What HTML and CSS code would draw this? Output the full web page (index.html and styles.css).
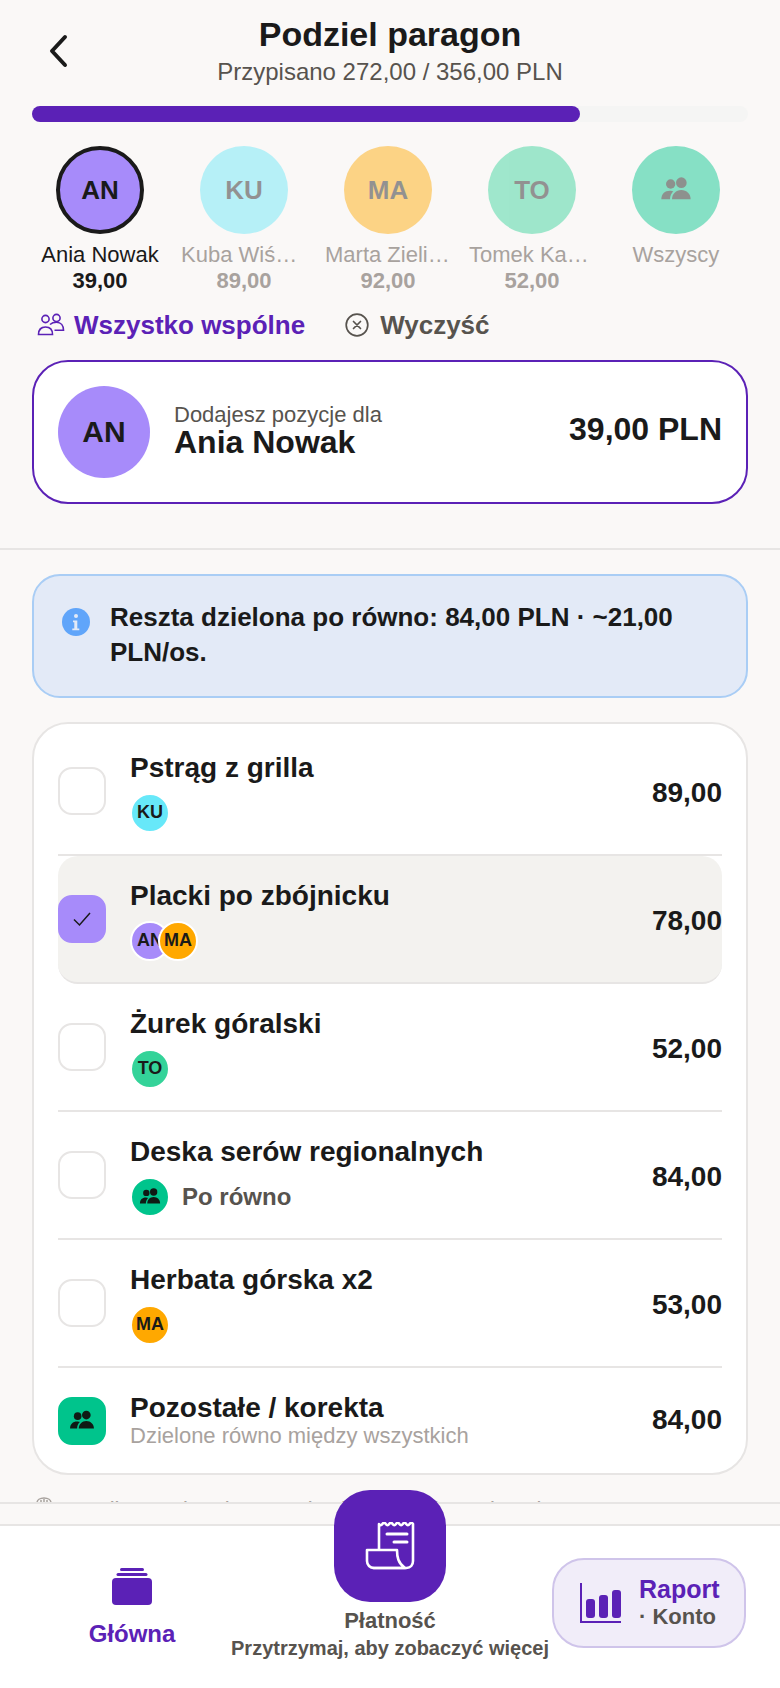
FILE: index.html
```html
<!DOCTYPE html>
<html lang="pl">
<head>
    <meta charset="UTF-8">
    <meta name="viewport" content="width=device-width, initial-scale=1.0">
    <title>Podziel paragon</title>
    <link rel="stylesheet" href="styles.css">
</head>
<body>
    <div class="screen">
        <header class="top">
            <button class="back" aria-label="Wstecz">
                <svg width="24" height="36" viewBox="0 0 24 36"><path d="M19 4 L6 18 L19 32" fill="none" stroke="#1a1a1a" stroke-width="4" stroke-linecap="round" stroke-linejoin="round"/></svg>
            </button>
            <h1>Podziel paragon</h1>
            <p class="subtitle">Przypisano 272,00 / 356,00 PLN</p>
        </header>

        <div class="progress"><div class="progress-fill"></div></div>

        <div class="people">
            <div class="person active">
                <div class="circle purple">AN</div>
                <div class="person-name">Ania Nowak</div>
                <div class="person-sum">39,00</div>
            </div>
            <div class="person">
                <div class="circle cyan">KU</div>
                <div class="person-name">Kuba Wiśniewski</div>
                <div class="person-sum">89,00</div>
            </div>
            <div class="person">
                <div class="circle orange">MA</div>
                <div class="person-name">Marta Zielińska</div>
                <div class="person-sum">92,00</div>
            </div>
            <div class="person">
                <div class="circle teal">TO</div>
                <div class="person-name">Tomek Kamiński</div>
                <div class="person-sum">52,00</div>
            </div>
            <div class="person">
                <div class="circle green">
                    <svg width="32" height="32" viewBox="0 0 24 24"><use href="#people-dark"/></svg>
                </div>
                <div class="person-name">Wszyscy</div>
            </div>
        </div>

        <div class="actions">
            <a class="action action-main">
                <svg width="28" height="24" viewBox="0 0 28 24" fill="none" stroke="#5b21b6" stroke-width="1.600"><circle cx="8.500" cy="6" r="3.600"/><circle cx="19.500" cy="5" r="3.600"/><path d="M1.500 21.500c0-5 3-7.500 7-7.500 4 0 7 2.500 7 7.500z"/><path d="M13 11.500c2-1.800 4-2.200 6.500-2.200 4.500 0 7 3.500 7 8h-9"/></svg>
                Wszystko wspólne
            </a>
            <a class="action action-clear">
                <svg width="24" height="24" viewBox="0 0 24 24" fill="none" stroke="#57534e" stroke-width="1.700" stroke-linecap="round"><circle cx="12" cy="12" r="10.800"/><path d="M8.500 8.500l7 7M15.500 8.500l-7 7"/></svg>
                Wyczyść
            </a>
        </div>

        <div class="current">
            <div class="circle purple big">AN</div>
            <div class="current-text">
                <div class="current-label">Dodajesz pozycje dla</div>
                <div class="current-name">Ania Nowak</div>
            </div>
            <div class="current-sum">39,00 PLN</div>
        </div>

        <div class="line"></div>

        <div class="info">
            <svg class="info-icon" width="28" height="28" viewBox="0 0 28 28"><circle cx="14" cy="14" r="14" fill="#60a5fa"/><circle cx="14" cy="8" r="2" fill="#e2eaf7"/><path d="M11 12.500h4.300v8h2v1.800h-7v-1.800h2v-6.200h-1.300z" fill="#e2eaf7"/></svg>
            <p>Reszta dzielona po równo: 84,00 PLN · ~21,00 PLN/os.</p>
        </div>

        <div class="items">
            <div class="item">
                <div class="check"></div>
                <div class="item-body">
                    <div class="item-name">Pstrąg z grilla</div>
                    <div class="chips"><span class="chip cyan-full">KU</span></div>
                </div>
                <div class="item-price">89,00</div>
            </div>
            <div class="item selected">
                <div class="check checked">
                    <svg width="22" height="22" viewBox="0 0 22 22"><path d="M3 11.500l5.500 5.500L19 5" fill="none" stroke="#1a1a1a" stroke-width="1.500"/></svg>
                </div>
                <div class="item-body">
                    <div class="item-name">Placki po zbójnicku</div>
                    <div class="chips">
                        <span class="chip purple">AN</span>
                        <span class="chip orange-full overlap">MA</span>
                    </div>
                </div>
                <div class="item-price">78,00</div>
            </div>
            <div class="item">
                <div class="check"></div>
                <div class="item-body">
                    <div class="item-name">Żurek góralski</div>
                    <div class="chips"><span class="chip teal-full">TO</span></div>
                </div>
                <div class="item-price">52,00</div>
            </div>
            <div class="item">
                <div class="check"></div>
                <div class="item-body">
                    <div class="item-name">Deska serów regionalnych</div>
                    <div class="chips">
                        <span class="chip green-full">
                            <svg width="22" height="22" viewBox="0 0 24 24"><use href="#people-dark"/></svg>
                        </span>
                        <span class="chip-label">Po równo</span>
                    </div>
                </div>
                <div class="item-price">84,00</div>
            </div>
            <div class="item">
                <div class="check"></div>
                <div class="item-body">
                    <div class="item-name">Herbata górska x2</div>
                    <div class="chips"><span class="chip orange-full">MA</span></div>
                </div>
                <div class="item-price">53,00</div>
            </div>
            <div class="item last">
                <div class="check rest">
                    <svg width="26" height="26" viewBox="0 0 24 24"><use href="#people-dark"/></svg>
                </div>
                <div class="item-body tight">
                    <div class="item-name">Pozostałe / korekta</div>
                    <div class="item-note">Dzielone równo między wszystkich</div>
                </div>
                <div class="item-price">84,00</div>
            </div>
        </div>

        <p class="hint">
            <svg width="18" height="24" viewBox="0 0 18 24" fill="none" stroke="#a8a29e" stroke-width="1.500"><path d="M2 12V6c0-3 3-5 7-5s7 2 7 5v6M6 12V3M9 12V2M12 12V3"/></svg>
            Tapnij pozycję, aby przypisać ją do wybranej osoby
        </p>
    </div>

    <nav class="bottom">
        <a class="tab-home">
            <svg width="40" height="37" viewBox="0 0 40 37"><rect x="8" y="0" width="24" height="3" rx="1.500" fill="#5b21b6"/><rect x="4.500" y="5" width="31" height="3" rx="1.500" fill="#5b21b6"/><rect x="0" y="10" width="40" height="27" rx="4" fill="#5b21b6"/></svg>
            <span>Główna</span>
        </a>
        <div class="tab-pay">
            <div class="pay-btn">
                <svg width="50" height="48" viewBox="0 0 50 48" fill="none" stroke="#fff" stroke-width="2.600" stroke-linejoin="round" stroke-linecap="round"><path d="M14 27V2q1.700 2.400 3.400 0t3.400 0 3.400 0 3.400 0 3.400 0 3.400 0 3.400 0 3.400 0 3.400 0 3.400 0V39c0 4-2.500 7-6.500 7H8"/><path d="M22 12h20M29 20h13" stroke-width="3"/><path d="M2 28h30c0 7 1 13 8 18H9c-4 0-7-3-7-7z"/></svg>
            </div>
            <div class="pay-title">Płatność</div>
            <div class="pay-sub">Przytrzymaj, aby zobaczyć więcej</div>
        </div>
        <a class="tab-report">
            <svg width="42" height="42" viewBox="0 0 42 42"><path d="M1 1v39h40" fill="none" stroke="#5b21b6" stroke-width="2"/><rect x="6" y="17" width="9" height="19" rx="3" fill="#5b21b6"/><rect x="19" y="13" width="9" height="23" rx="3" fill="#5b21b6"/><rect x="32" y="8" width="9" height="28" rx="3" fill="#5b21b6"/></svg>
            <div class="report-text">
                <div class="report-title">Raport</div>
                <div class="report-sub">· Konto</div>
            </div>
        </a>
    </nav>

    <svg class="defs" width="0" height="0">
        <defs>
            <g id="people-dark" fill="#0f1a14"><circle cx="8" cy="7.500" r="3.500"/><circle cx="16" cy="6.500" r="4"/><path d="M1 19c0-4 2.500-6.500 6.500-6.500 1 0 2 .2 2.500.5-1.500 1.500-2.500 3.500-2.500 6z"/><path d="M9 19c0-4 3-7 7-7s7 3 7 7z"/></g>
        </defs>
    </svg>
</body>
</html>
```

FILE: styles.css
```css
* {
    box-sizing: border-box;
}

html, body {
    margin: 0;
    padding: 0;
}

body {
    width: 780px;
    height: 1688px;
    overflow: hidden;
    background-color: #faf8f7;
    font-family: "Liberation Sans", Arial, sans-serif;
    color: #1a1a1a;
    display: flex;
    flex-direction: column;
}

.defs {
    position: absolute;
}

.screen {
    height: 1504px;
    overflow: hidden;
    padding: 0 32px;
    border-bottom: 2px solid #e7e5e4;
    flex-shrink: 0;
}

/* header */
.top {
    position: relative;
    margin: 0 -32px;
    padding-top: 14px;
    text-align: center;
}

.back {
    position: absolute;
    left: 46px;
    top: 33px;
    padding: 0;
    border: 0;
    background: none;
}

h1 {
    margin: 0;
    font-size: 34px;
    line-height: 40px;
    font-weight: bold;
}

.subtitle {
    margin: 2px 0 0;
    font-size: 24px;
    line-height: 32px;
    color: #57534e;
}

.progress {
    height: 16px;
    margin-top: 18px;
    border-radius: 8px;
    background-color: #f5f5f4;
}

.progress-fill {
    width: 76.5%;
    height: 100%;
    border-radius: 8px;
    background-color: #5b21b6;
}

/* people row */
.people {
    display: flex;
    margin: 24px -4px 0;
}

.person {
    width: 144px;
    text-align: center;
    color: #a8a29e;
    font-size: 22px;
}

.circle {
    width: 88px;
    height: 88px;
    margin: 0 auto;
    border-radius: 50%;
    display: flex;
    align-items: center;
    justify-content: center;
    font-size: 26px;
    font-weight: bold;
    color: #1a1a1a;
}

.person .circle {
    opacity: 0.46;
}

.person.active .circle {
    opacity: 1;
    border: 4px solid #1a1a1a;
}

.purple { background-color: #a78bfa; }
.cyan { background-color: #67e8f9; }
.orange { background-color: #ffa800; }
.teal { background-color: #34d399; }
.green { background-color: #00c48c; }
.cyan-full { background-color: #67e8f9; }
.orange-full { background-color: #ffa800; }
.teal-full { background-color: #34d399; }
.green-full { background-color: #00c48c; }

.person-name {
    margin: 8px 9px 0;
    line-height: 26px;
    white-space: nowrap;
    overflow: hidden;
    text-overflow: ellipsis;
}

.person-sum {
    line-height: 26px;
    font-weight: bold;
}

.person.active {
    color: #1a1a1a;
}

/* quick actions */
.actions {
    display: flex;
    align-items: center;
    gap: 40px;
    margin: 14px 5px 0;
}

.action {
    display: flex;
    align-items: center;
    gap: 9px;
    font-size: 26px;
    font-weight: bold;
    line-height: 34px;
}

.action-main {
    color: #5b21b6;
}

.action-clear {
    gap: 11px;
    color: #57534e;
}

/* current person */
.current {
    display: flex;
    align-items: center;
    height: 144px;
    margin-top: 18px;
    padding: 0 24px;
    border: 2px solid #5b21b6;
    border-radius: 36px;
    background-color: #fff;
}

.circle.big {
    width: 92px;
    height: 92px;
    margin: 0 24px 0 0;
    font-size: 30px;
}

.current-text {
    flex: 1;
    margin-top: -4px;
}

.current-label {
    font-size: 22px;
    line-height: 28px;
    color: #57534e;
}

.current-name {
    margin-top: -5px;
    font-size: 32px;
    line-height: 36px;
    font-weight: bold;
}

.current-sum {
    margin-top: -6px;
    font-size: 32px;
    font-weight: bold;
}

.line {
    height: 2px;
    margin: 44px -32px 24px;
    background-color: #e7e5e4;
}

/* info box */
.info {
    display: flex;
    align-items: flex-start;
    gap: 20px;
    padding: 24px 24px 26px 28px;
    border: 2px solid #a9cdf5;
    border-radius: 28px;
    background-color: #e3eaf7;
}

.info-icon {
    flex-shrink: 0;
    margin-top: 8px;
}

.info p {
    margin: 0;
    font-size: 26px;
    line-height: 35px;
    font-weight: bold;
}

/* list of items */
.items {
    margin-top: 24px;
    padding: 4px 24px 0;
    border: 2px solid #e7e5e4;
    border-radius: 36px;
    background-color: #fff;
}

.item {
    display: flex;
    align-items: center;
    height: 128px;
    border-bottom: 2px solid #e7e5e4;
}

.item.last {
    border-bottom: 0;
    height: 105px;
}

.item.selected {
    border-bottom-color: #e7e5e4;
    border-radius: 20px;
    background-color: #f3f2ef;
}

.check {
    width: 48px;
    height: 48px;
    flex-shrink: 0;
    border: 2px solid #e7e5e4;
    border-radius: 14px;
    background-color: #fff;
    display: flex;
    align-items: center;
    justify-content: center;
}

.check.checked {
    border-color: #a78bfa;
    background-color: #a78bfa;
}

.check.rest {
    border-color: #00c48c;
    background-color: #00c48c;
}

.item-body {
    flex: 1;
    margin-left: 24px;
}

.item-name {
    font-size: 28px;
    line-height: 36px;
    font-weight: bold;
}

.item-body.tight .item-name {
    line-height: 30px;
}

.item-note {
    font-size: 22px;
    line-height: 26px;
    color: #a8a29e;
}

.chips {
    display: flex;
    align-items: center;
    margin-top: 7px;
}

.chip {
    width: 40px;
    height: 40px;
    border: 2px solid #fff;
    border-radius: 50%;
    display: flex;
    align-items: center;
    justify-content: center;
    font-size: 18px;
    font-weight: bold;
    overflow: hidden;
}

.chip.overlap {
    margin-left: -12px;
}

.chip-label {
    margin-left: 12px;
    font-size: 24px;
    font-weight: bold;
    color: #57534e;
}

.item-price {
    margin-top: 4px;
    font-size: 28px;
    font-weight: bold;
}

.item.last .item-price {
    margin-top: -2px;
}

.hint {
    display: flex;
    align-items: flex-start;
    gap: 9px;
    margin: 22px 0 0 3px;
    font-size: 22px;
    line-height: 26px;
    color: #a8a29e;
    white-space: nowrap;
}

/* bottom navigation */
.bottom {
    position: relative;
    height: 164px;
    margin-top: 20px;
    border-top: 2px solid #e7e5e4;
    background-color: #fff;
}

.tab-home {
    position: absolute;
    left: 88px;
    top: 42px;
    width: 88px;
    display: flex;
    flex-direction: column;
    align-items: center;
    gap: 15px;
    color: #5b21b6;
    font-size: 24px;
    font-weight: bold;
}

.tab-pay {
    position: absolute;
    left: 0;
    right: 0;
    top: -36px;
    display: flex;
    flex-direction: column;
    align-items: center;
    text-align: center;
}

.pay-btn {
    width: 112px;
    height: 112px;
    border-radius: 36px;
    background-color: #5b21b6;
    display: flex;
    align-items: center;
    justify-content: center;
}

.pay-title {
    margin-top: 5px;
    font-size: 22px;
    line-height: 28px;
    font-weight: bold;
    color: #57534e;
}

.pay-sub {
    font-size: 20px;
    line-height: 26px;
    font-weight: bold;
    color: #57534e;
}

.tab-report {
    position: absolute;
    left: 552px;
    top: 32px;
    width: 194px;
    height: 90px;
    padding-left: 26px;
    border: 2px solid #cfc4ea;
    border-radius: 32px;
    background-color: #f1edf9;
    display: flex;
    align-items: center;
    gap: 17px;
}

.report-text {
    margin-top: -2px;
}

.report-title {
    font-size: 25px;
    line-height: 30px;
    font-weight: bold;
    color: #5b21b6;
}

.report-sub {
    font-size: 22px;
    line-height: 26px;
    font-weight: bold;
    color: #57534e;
}
```
